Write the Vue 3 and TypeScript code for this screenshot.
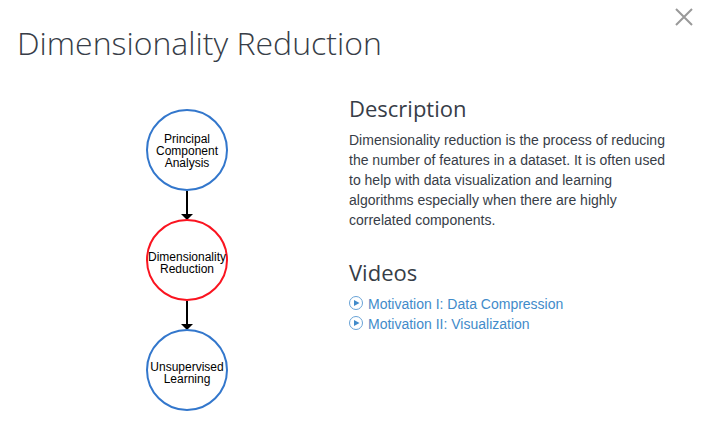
<script setup lang="ts">
interface ConceptNode {
  lines: string[]
  y: number
  current?: boolean
}

interface Video {
  title: string
  href: string
}

const nodes: ConceptNode[] = [
  { lines: ['Principal', 'Component', 'Analysis'], y: 42 },
  { lines: ['Dimensionality', 'Reduction'], y: 152, current: true },
  { lines: ['Unsupervised', 'Learning'], y: 262 },
]

const videos: Video[] = [
  { title: 'Motivation I: Data Compression', href: '#data-compression' },
  { title: 'Motivation II: Visualization', href: '#visualization' },
]

const lineHeight = 12

function baseline(node: ConceptNode, index: number): number {
  return node.y + (node.lines.length === 3 ? -7 : 1) + index * lineHeight
}
</script>

<template>
  <main class="dialog">
    <header class="header">
      <h1 class="title">Dimensionality Reduction</h1>
      <button class="close" type="button" aria-label="Close">
        <svg width="18" height="18" viewBox="0 0 18 18" aria-hidden="true">
          <path d="M1 1L17 17M17 1L1 17" />
        </svg>
      </button>
    </header>

    <div class="columns">
      <div class="graph">
        <svg width="84" height="304" viewBox="0 0 84 304">
          <g v-for="node in nodes.slice(0, -1)" :key="node.y">
            <path class="edge" :d="`M42 ${node.y + 41}V${node.y + 65}`" />
            <path class="arrow" :d="`M36 ${node.y + 64}H48L42 ${node.y + 70}Z`" />
          </g>
          <g v-for="node in nodes" :key="node.y">
            <circle class="node" :class="{ current: node.current }" cx="42" :cy="node.y" r="40" />
            <text
              v-for="(line, index) in node.lines"
              :key="line"
              class="label"
              x="42"
              :y="baseline(node, index)"
            >{{ line }}</text>
          </g>
        </svg>
      </div>

      <div class="details">
        <section>
          <h2 class="heading">Description</h2>
          <p class="text">
            Dimensionality reduction is the process of reducing the number of features in a dataset.
            It is often used to help with data visualization and learning algorithms especially when
            there are highly correlated components.
          </p>
        </section>
        <section>
          <h2 class="heading">Videos</h2>
          <ul class="videos">
            <li v-for="video in videos" :key="video.href">
              <a class="video" :href="video.href">
                <svg width="14" height="14" viewBox="0 0 14 14" aria-hidden="true">
                  <circle cx="7" cy="7" r="6.5" />
                  <path d="M5 4L10.5 7L5 10Z" />
                </svg>
                <span>{{ video.title }}</span>
              </a>
            </li>
          </ul>
        </section>
      </div>
    </div>
  </main>
</template>

<style>
body {
  margin: 0;
  background: #fff;
}
</style>

<style scoped>
.dialog {
  padding: 8px 20px 20px 17px;
  color: #373d47;
  font-family: "Liberation Sans", Helvetica, Arial, sans-serif;
  font-size: 14px;
  line-height: 20px;
}

.header {
  display: flex;
  justify-content: space-between;
  align-items: flex-start;
}

.title {
  margin: 13px 0 0;
  font-family: "Open Sans", sans-serif;
  font-size: 32px;
  font-weight: 300;
  line-height: 44px;
}

.close {
  margin: 0 -12px 0 0;
  padding: 0;
  border: 0;
  background: none;
  line-height: 0;
  cursor: pointer;
}

.close path {
  fill: none;
  stroke: #999;
  stroke-width: 2;
}

.columns {
  display: grid;
  grid-template-columns: 1fr 1fr;
  padding-top: 28px;
}

.graph {
  display: flex;
  justify-content: center;
  align-items: flex-start;
  padding: 15px 0 0 8px;
}

.edge {
  fill: none;
  stroke: #000;
  stroke-width: 2;
}

.arrow {
  fill: #000;
}

.node {
  fill: #fff;
  stroke: #3377cc;
  stroke-width: 2;
}

.node.current {
  stroke: #fa1420;
}

.label {
  fill: #000;
  font-size: 12px;
  text-anchor: middle;
}

.details {
  display: flex;
  flex-direction: column;
  gap: 27px;
  padding-right: 8px;
}

.heading {
  margin: 0 0 7px;
  font-family: "Open Sans", sans-serif;
  font-size: 22px;
  font-weight: 400;
  line-height: 30px;
}

.text {
  margin: 0;
}

.videos {
  margin: 0;
  padding: 0;
  list-style: none;
}

.video {
  display: flex;
  align-items: flex-start;
  gap: 5px;
  color: #428bca;
  text-decoration: none;
}

.video svg {
  margin-top: 2px;
}

.video circle {
  fill: none;
  stroke: #68a2d5;
  stroke-width: 1;
}

.video path {
  fill: #428bca;
}
</style>
